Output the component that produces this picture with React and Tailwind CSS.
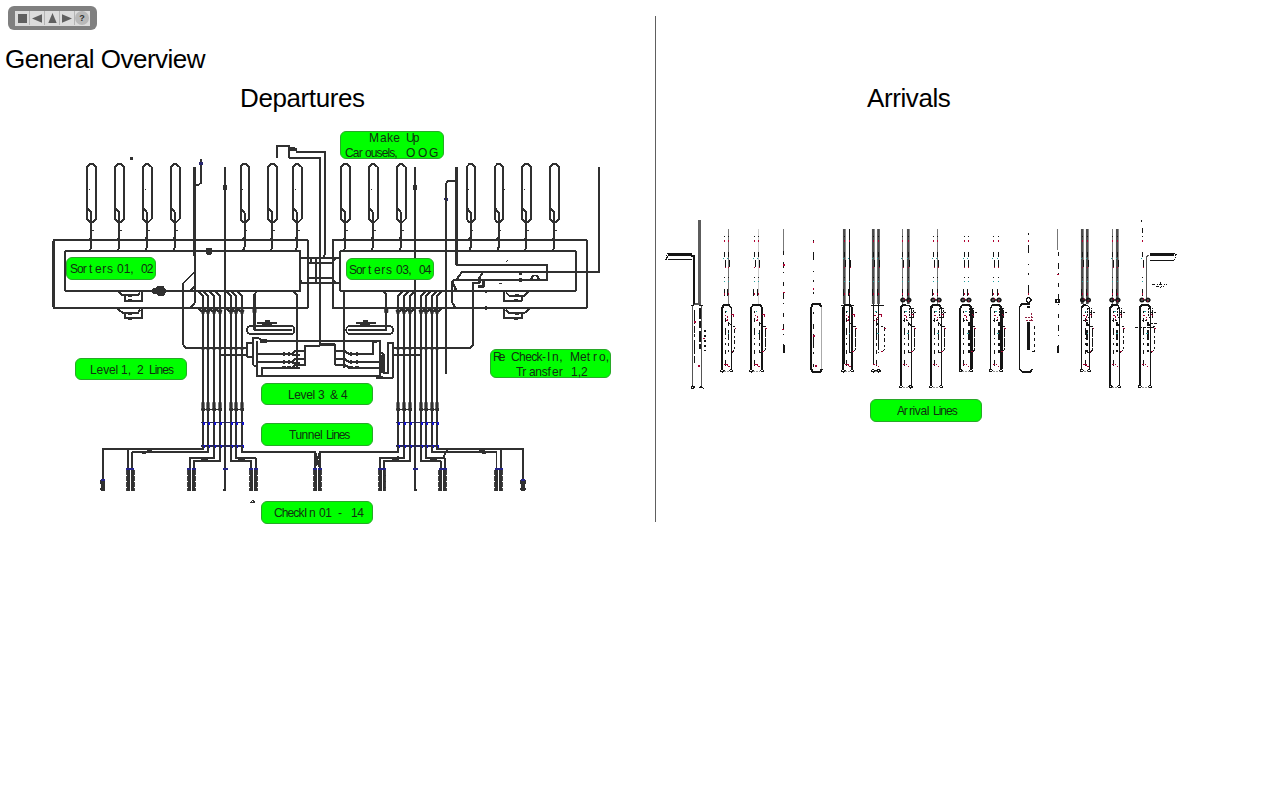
import React from "react";

const INK = "#303030";

const labels = {
  departures: [
    { box: "left-[340px] top-[131px] w-[104px] h-[28px]", lines: [
      [["M", "left-[28px]"], ["ake", "left-[39px] tracking-[0.3px]"], ["Up", "left-[65px] tracking-[-2px]"]],
      [["Car", "left-[4px] tracking-[-0.8px]"], ["ousels,", "left-[24px] tracking-[-0.9px]"], ["O", "left-[65px]"], ["O", "left-[77px]"], ["G", "left-[88px]"]],
    ] },
    { box: "left-[66px] top-[257px] w-[90px] h-[23px]", lines: [
      [["Sor", "left-[3px] tracking-[-1px]"], ["t", "left-[22px]"], ["er", "left-[28px] tracking-[0.6px]"], ["s", "left-[40px]"], ["01,", "left-[50px]"], ["02", "left-[74px] tracking-[-0.9px]"]],
    ] },
    { box: "left-[346px] top-[258px] w-[88px] h-[22px]", lines: [
      [["Sor", "left-[2px] tracking-[-1px]"], ["t", "left-[21px]"], ["er", "left-[27px] tracking-[0.6px]"], ["s", "left-[39px]"], ["03,", "left-[49px] tracking-[-0.5px]"], ["04", "left-[72px] tracking-[-0.8px]"]],
    ] },
    { box: "left-[75px] top-[358px] w-[112px] h-[22px]", lines: [
      [["Level", "left-[14px] tracking-[-0.1px]"], ["1,", "left-[45px]"], ["2", "left-[61px]"], ["Lines", "left-[73px] tracking-[-0.9px]"]],
    ] },
    { box: "left-[261px] top-[383px] w-[112px] h-[22px]", lines: [
      [["Level", "left-[26px] tracking-[-0.4px]"], ["3", "left-[56px]"], ["&", "left-[68px]"], ["4", "left-[79px]"]],
    ] },
    { box: "left-[490px] top-[349px] w-[121px] h-[29px]", lines: [
      [["Re", "left-[2px] tracking-[-3px]"], ["Check-", "left-[20px] tracking-[-0.6px]"], ["I", "left-[56px]"], ["n,", "left-[61px] tracking-[0.5px]"], ["Met", "left-[79px] tracking-[0px]"], ["r", "left-[102px]"], ["o,", "left-[108px]"]],
      [["Tr", "left-[25px] tracking-[-0.6px]"], ["ansf", "left-[38px] tracking-[-0.3px]"], ["er", "left-[61px]"], ["1,2", "left-[80px]"]],
    ] },
    { box: "left-[261px] top-[423px] w-[112px] h-[23px]", lines: [
      [["Tunnel", "left-[27px] tracking-[-0.5px]"], ["Lines", "left-[64px] tracking-[-1.1px]"]],
    ] },
    { box: "left-[261px] top-[501px] w-[112px] h-[23px]", lines: [
      [["Check", "left-[12px] tracking-[-0.9px]"], ["I", "left-[42px]"], ["n", "left-[47px]"], ["01", "left-[57px] tracking-[-0.3px]"], ["-", "left-[76px]"], ["14", "left-[89px] tracking-[-0.3px]"]],
    ] },
  ],
  arrivals: [
    { box: "left-[214px] top-[399px] w-[112px] h-[23px]", lines: [
      [["Ar", "left-[26px] tracking-[-1.2px]"], ["rival", "left-[38px] tracking-[-0.4px]"], ["Lines", "left-[62px] tracking-[-1px]"]],
    ] },
  ],
};

function Label({ box, lines }) {
  return (
    <button className={`absolute ${box} flex flex-col justify-center rounded-[6px] border border-[#28a828] bg-[#00ff00] text-left`}>
      {lines.map((words, i) => (
        <span key={i} className="relative block h-[15px] w-full shrink-0">
          {words.map(([t, pos], j) => (
            <span key={j} className={`absolute top-px ${pos} origin-center scale-y-112 whitespace-pre text-[12px] leading-[15px] text-[#103010]`}>{t}</span>
          ))}
        </span>
      ))}
    </button>
  );
}

function Toolbar() {
  const cell = "flex h-[14px] w-[15px] items-center justify-center border-r border-[#b5b5b5]";
  return (
    <nav className="ml-2 flex h-6 w-[89px] items-center justify-center rounded-[6px] bg-[#808080]">
      <div className="flex h-[15px] w-[75px] items-center bg-[#dcdcdc]">
        <span className={cell}><svg width="9" height="9"><path d="M0 0h9v9h-9z" fill="#606060" /></svg></span>
        <span className={cell}><svg width="10" height="9"><path d="M0 4.5L10 0.3v8.4z" fill="#606060" /></svg></span>
        <span className={cell}><svg width="9" height="10"><path d="M4.5 0L8.7 10h-8.4z" fill="#606060" /></svg></span>
        <span className={cell}><svg width="10" height="9"><path d="M0 0.3L10 4.5L0 8.7z" fill="#606060" /></svg></span>
        <span className="flex h-[14px] w-[14px] items-center justify-center rounded-full bg-[#b8b8b8] text-[9px] font-bold leading-none text-[#303030]">?</span>
      </div>
    </nav>
  );
}

const carousels = [91.3, 119.3, 147, 175, 244.5, 272.3, 297, 345.3, 373, 401, 470.7, 498.7, 526.3, 554.3];
const leftBundle = [203, 208, 214, 220, 231, 236, 242];
const rightBundle = [398, 404, 410, 421, 426, 432, 437];
const desks = [128.3, 132.3, 189.3, 193.7, 251.3, 255.7, 315.3, 319.7, 380, 384, 440.7, 444.7, 496.5, 500.7];

function Bundle({ xs, dir, mid }) {
  const a = xs[0] - 2;
  const b = xs[6] + 2;
  return (
    <g>
      {xs.map((x) => (
        <g key={x}>
          <path d={`M${x - dir * 5} 291L${x} 296V446M${x - dir * 5} 308l${dir * 4} 4`} strokeWidth="2" />
          <path d={`M${x - 2} 310h4l-1 4h-2zM${x - 1.3} 402.5h2.6v5h-2.6z`} fill={INK} strokeWidth="0.8" />
          <path d={`M${x - 1} 347h2v3h-2zM${x - 1.5} 408h3v2.5h-3z`} fill={INK} strokeWidth="0.8" />
        </g>
      ))}
      <path d={`M${mid} 167V490`} strokeWidth="2" />
      <path d={`M${a} 409.3H${xs[dir > 0 ? 3 : 2] + 2}M${xs[dir > 0 ? 4 : 3] - 2} 409.3H${b}`} strokeWidth="1.3" />
      <path d={`M${a} 446H${b}M${a} 422.7H${b}`} stroke="#26265a" strokeWidth="1.2" />
      {xs.map((x) => (
        <path key={x} d={`M${x} 421.5h2v3h-2zM${x} 445h2v3h-2z`} fill="#1111cc" stroke="none" />
      ))}
      <path d={`M${mid - 1.2} 186h2.4v3h-2.4z`} fill={INK} />
    </g>
  );
}

function DepartureDiagram() {
  return (
    <svg className="block" width="655" height="530" viewBox="0 0 655 530" fill="none" stroke={INK} strokeWidth="2" strokeLinejoin="round" shapeRendering="crispEdges">
      {carousels.map((x, i) => (
        <g key={x}>
          <path d={`M${x - 4} 219V167l2.5-2.8h3l3 2.8V219l-3 3h-3z`} />
          <path d={`M${x - 3.5} 208.5l3.5 4V247l-1.5 3.5M${x} 237l-2 2.7`} />
          <path d={`M${x + (i % 2 ? 5 : -2.5)} 189h1M${x + 1} 230.5h1.5`} strokeWidth="1" />
        </g>
      ))}
      <rect x="53.5" y="240" width="254.2" height="68" rx="1" strokeWidth="2.1" />
      <rect x="65.2" y="251" width="234.8" height="40.2" rx="1" />
      <rect x="332.9" y="240" width="254" height="68" rx="1" />
      <rect x="340.2" y="251" width="235.6" height="40.2" rx="1" strokeWidth="2" />
      <Bundle xs={leftBundle} dir={1} mid={225} />
      <Bundle xs={rightBundle} dir={-1} mid={415} />

      <path d="M194.6 167V256" strokeWidth="2.5" />
      <path d="M194.6 256V303L190 308M194.6 272L183 283.5V344.5L186 347.8H247M201.2 159V182.5L199 184.5H195M190 291l4.5-5" />
      <path d="M276.7 158V145.7H289.3V157.7H320V345M290 148.5H296.5V152.2H325V254.5L323 257.5" strokeWidth="1.8" />
      <path d="M290 147.5h5v3h-5z" fill={INK} strokeWidth="1" />
      <path d="M300 263V259L303 257.7H340M308 262.7H332M308 278H332M300 278L302 283.2H340M311 258v5M316 258v25M332 262l3-3M332 278l4 5" strokeWidth="1.6" />
      <path d="M205.5 251l1.5-2.5h4l1.5 2.5-1.5 3h-4z" fill={INK} strokeWidth="1" />
      <path d="M151 291.3l2.5-3.2h2.5l2-1.5h5l2.5 3v3l-2 2.5h-5l-2-1.3h-2z" fill={INK} strokeWidth="1" />
      <path d="M130 158.5h2.5M161 308v1" strokeWidth="2.4" />
      <path d="M484.5 291.3h2.5M484.5 308h2.5" strokeWidth="3.4" />
      <path d="M199.5 162.5h3v2h-3zM444.5 198h3v2h-3z" fill="#27276f" stroke="#27276f" strokeWidth="1" />
      {[0, 17.5].map((d) => (
        <g key={d}>
          <path d={`M117.5 ${291 + d}l5 4.3H138l2-3M124.5 ${296 + d}v4.8H142.2V${291.5 + d}`} />
          <path d={`M529.5 ${291 + d}l-5 4.5H509l-3-3M521.7 ${296 + d}v4.8H504V${291.5 + d}`} />
          <path d={`M128 ${295.7 + d}h4M128 ${300.5 + d}h4M515 ${295.7 + d}h4M514 ${300.5 + d}h4`} strokeWidth="3" />
        </g>
      ))}

      <path d="M446 373.5V183.5L448 181.3H456" />
      <path d="M456.4 167V265" strokeWidth="2.4" />
      <path d="M456.4 264.8H547.3V280H453M457 279L461.7 272.4H599.3V167M453 280L452 283.5V302L455 307.5M482.5 273L479.5 277.5V279M483.5 280.5V286.5H478M473.2 345L470.5 347.8H393M473.2 345V283H479.5V278.5M530 280L534 275M536 275l4 5" strokeWidth="2.1" />
      <path d="M520.5 270.5v4M520.5 278v4M452 281l4 9" strokeWidth="2.4" />
      <path d="M506 261.5l2-1.3M499 283h3" strokeWidth="1" />

      <rect x="247" y="325.8" width="47.5" height="8.4" rx="4" />
      <rect x="346.3" y="325.8" width="46.7" height="8.4" rx="4" />
      <path d="M257 291.5L254.5 294V330.3H292M294 291.5l2.7 3V354M344 291.5V368M383.5 291.5L386.2 294V330.3H348" strokeWidth="2.1" />
      <path d="M257 322.5h20M355.5 322.5h20" strokeWidth="2" />
      <path d="M262 323.5h10M264.5 321h5M360 323.5h10M363 321h5" strokeWidth="2" />
      <path d="M252.8 308.5v4h3.4v-4zM384.5 308.5v4h3.4v-4z" fill={INK} strokeWidth="0.8" />
      <path d="M220 358V354.8H247M393 354.8H420M247.4 342.8H253V357H247.4zM253 365V338.3H258.5L263 341.3H380V377M253 365L257 367V376H378M257 341V373M261.7 375.5V367.7H289M258 362H289M258 354H289M320 346H305.3V365M320 345H335V365" />
      <path d="M261 340h5v2h-5z" fill={INK} />
      {[354, 362, 367.7].map((y) => (
        <g key={y}>
          <path d={`M283 ${y - 1}h2v2h-2zM288 ${y - 1}h2v2h-2zM350 ${y - 1}h2v2h-2zM356 ${y - 1}h2v2h-2z`} fill={INK} strokeWidth="1.2" />
          <path d={`M283 ${y}h9l3-2.7h10M289 ${y}l4 .7h7M335 ${y - 2.7}h10l4 2.7h8`} />
        </g>
      ))}
      <path d="M296.5 351v17.5M305.3 346v19.5M344 362v6M357 354H372.7V341M357 362H380M357 367.7H380M380 341v11L383.5 354V373H388.3V343H392.7V377.7H376M381.5 355v18M376 375.5l8 2.2M320 343.5h15" />
      <path d="M371.5 340h5v2h-5zM379 364h2v7h-2z" fill={INK} strokeWidth="1" />

      <path d="M203 446V449.2H102.7V490M208 446V452.2H132.3V470M128.3 449.2V470M214 446V457.8H189.6V470M220 446V461H193.8V470M231 446V461H251.3V470M236 446V457.8H255.7V470M242 446V452.2H315.3V470M398 446V452.2H319.7V470M404 446V457.8H380V470M410 446V461H384V470M421 446V461H440.7V470M426 446V457.8H444.7V470M432 446V452.2H496.5V470M437 446V449.2H523.2V490M500.7 449.2V470M447 450L443 457.5M315.3 452l4.5 16M319.7 452l-4.5 15" strokeWidth="1.8" />
      <path d="M148 448.5h4l-1 3h-3zM142 452.5h4M202 459.5l5-2v3zM239 458.5l5 1-4 1.5zM393 460l5-3v3zM430 457.5l6 2-4 1zM478 448.5h4l4 4h-4zM316 464h4" strokeWidth="2" fill={INK} />
      {desks.map((x, i) => (
        <g key={x}>
          <path d={`M${x} 468V491`} strokeWidth="3" />
          <path d={`M${x + (i % 2 ? 1.8 : -1.8)} 470V491`} stroke="#444" strokeWidth="1" strokeDasharray="5 1" />
          <path d={`M${x - 2} 469.2h4`} stroke="#24248a" strokeWidth="1.7" />
        </g>
      ))}
      {[102.7, 523].map((x) => (
        <path key={x} d={`M${x - 2} 480.5h4v3h-4zM${x - 1.3} 484.5h2.6v2h-2.6zM${x - 2} 488h4v2h-4z`} fill={INK} strokeWidth="1.1" />
      ))}
      <path d="M100.7 479.7h4M521 479.7h4M222.5 469.3h5M412.5 469.3h5" stroke="#24248a" strokeWidth="1.7" />
      <path d="M223 490h3M414 490h3M251 502.5l1.8-2.5 1.8 2.5z" strokeWidth="1.1" />
    </svg>
  );
}

/* a/b: feed line positions, l/r: their styles; bl/br: box edges; end: box bottom; side: recirculation edge */
const units = [
  { a: 724.7, b: 728.3, l: "dash", r: "thin", bl: 722, br: 731.3, end: 371, side: 734.5, wl: 2.4, wr: 1.3 },
  { a: 754.3, b: 758.5, l: "dash", r: "pale", bl: 751, br: 762.3, end: 371, side: 765, wl: 1.6, wr: 2 },
  { a: 844.3, b: 849.5, l: "gray", r: "solid", bl: 843, br: 852.3, end: 371, side: 855, wl: 1.4, wr: 1.7, fill: true },
  { a: 873.3, b: 878.5, l: "gray", r: "gray", bl: 873, br: 879, end: 371, side: 884, wl: 2, wr: 1.8, fill: true, open: true },
  { a: 902.7, b: 908.3, l: "thin", r: "gray", bl: 900.7, br: 911, end: 387, side: 914, wl: 2.2, wr: 1, valve: true },
  { a: 933.5, b: 937.8, l: "dash", r: "thin", bl: 930.8, br: 941.3, end: 387, side: 944, wl: 2.6, wr: 1.5, valve: true },
  { a: 964, b: 968, l: "dash", r: "dash", bl: 960.3, br: 971.5, end: 371, side: 974.3, wl: 1.7, wr: 2.2, valve: true },
  { a: 993.5, b: 998, l: "dash", r: "dash", bl: 990.5, br: 1001.5, end: 371, side: 1004.2, wl: 1.3, wr: 2.2, valve: true },
  { a: 1082.3, b: 1087.3, l: "gray", r: "gray", bl: 1081.5, br: 1089.5, end: 371, side: 1092.5, wl: 1.8, wr: 1, valve: true },
  { a: 1112.7, b: 1117.3, l: "thin", r: "gray", bl: 1110.3, br: 1119.5, end: 387, side: 1123, wl: 2.2, wr: 1.5, valve: true },
  { a: 1142.7, b: 1147, l: "high", r: "none", bl: 1139.5, br: 1150.5, end: 387, side: 1154, wl: 2, wr: 1.8, valve: true },
];

function Feed({ x, kind }) {
  if (kind === "none") return null;
  return (
    <g>
      {kind === "gray" && <path d={`M${x} 229V304`} stroke="#4c4c4c" strokeWidth="2.7" shapeRendering="auto" />}
      {kind === "solid" && <path d={`M${x} 229V304`} strokeWidth="1.4" />}
      {kind === "thin" && <path d={`M${x} 229V304`} stroke="#777" strokeWidth="1" />}
      {kind === "pale" && <path d={`M${x} 229V304`} stroke="#ccc" strokeWidth="1" />}
      {kind === "high" && <path d="M1141.5 220v2M1142 228v5" strokeWidth="1" />}
      <path d={`M${x} 236V237M${x} 252V257M${x + 0.8} 260V267M${x} 277V278M${x - 0.7} 289V296`} strokeWidth="1" />
      <path d={`M${x} 240V242M${x + 0.5} 267V268M${x} 293V295`} stroke="#b00030" strokeWidth="1" />
      <path d={`M${x - 1} 258V259M${x} 281V282`} stroke="#20a0a0" strokeWidth="1" />
    </g>
  );
}

function Valve({ x }) {
  return (
    <g strokeWidth="1.4" shapeRendering="auto">
      <circle cx={x - 3} cy="300" r="1.8" />
      <circle cx={x + 3} cy="300" r="1.8" />
      <path d={`M${x - 5.5} 300h11`} />
      <path d={`M${x - 2} 299h1M${x + 2} 301h1`} stroke="#b00030" />
    </g>
  );
}

function Unit({ u }) {
  const m = (u.bl + u.br) / 2;
  return (
    <g>
      <Feed x={u.a} kind={u.l} />
      <Feed x={u.b} kind={u.r} />
      {u.fill && <path d={`M${u.a} 304V364M${u.b} 304V350`} strokeWidth="1.6" />}
      {u.fill && <path d={`M${u.bl - 2} 305.5h13`} strokeWidth="1.2" />}
      {u.valve && <Valve x={m} />}
      {!u.open && <path d={`M${u.bl} ${u.end - 2}V308L${u.bl + 2} 305H${m}`} strokeWidth={u.wl} />}
      {!u.open && <path d={`M${m} 305H${u.br - 2}L${u.br} 308V${u.end - 2}`} strokeWidth={u.wr} />}
      <path d={`M${u.bl - 1.5} ${u.end}l1.5-2 2 1.5-1.5 1.5zM${u.br + 1.5} ${u.end}l-1.5-2-2 1.5 1.5 1.5z`} strokeWidth="1" />
      <path d={`M${u.bl + 2} ${u.end}H${u.br - 2}`} stroke="#999" strokeWidth="1" strokeDasharray="2 1" />
      <path d={`M${u.bl + 3.5} 311V366`} strokeWidth="1" strokeDasharray="2 5 4 6 7 3 1 4" />
      <path d={`M${u.br - 2.5} 323V352`} strokeWidth="1.2" strokeDasharray="3 4 10 3" />
      <path d={`M${m - 2} 315l3 2v3l-3 1M${m - 3} 364h3l3 3`} stroke="#a00030" strokeWidth="1" strokeDasharray="2 1" />
      <path d={`M${m} 311v1M${m + 2} 333v1`} stroke="#20a0a0" />
      <path d={`M${u.br - 3} 322l3 4H${u.side}V350l-2 2h-4`} strokeWidth="1" strokeDasharray={u.side - u.br > 3 ? "4 3 2 2" : "9 1"} />
      <path d={`M${u.side - 3} 351h1.5M${u.side} 328h1.5M${u.br} 314h2v3`} stroke="#a00030" strokeWidth="1" />
      {u.valve && <path d={`M${u.br - 2} 308h4v9h-4zM${u.br} 312h5M${m - 3} 320h6`} strokeWidth="1" strokeDasharray="2 1" />}
    </g>
  );
}

function ArrivalDiagram() {
  return (
    <svg className="block" width="622" height="530" viewBox="656 0 622 530" fill="none" stroke="#151515" strokeWidth="1.3" shapeRendering="crispEdges">
      {units.map((u) => <Unit key={u.bl} u={u} />)}
      <path d="M699.5 220V304" stroke="#5c5c5c" strokeWidth="3" />
      <path d="M668 254.5H692M1150 254.5H1174" strokeWidth="2.6" />
      <path d="M668 259.7H692M1150 260.5H1174" strokeWidth="1.4" />
      <path d="M668 253l-2 2 2 2-3 2 3 1M1173 253l3 1.5-1 3M1174 260l2-2" strokeWidth="1" strokeDasharray="2 1" />
      <path d="M691 256H693.7V305" strokeWidth="1.6" />
      <path d="M1146.7 298V257l2-2" strokeWidth="1" stroke="#555" />
      <path d="M692.6 387V306L695 304h5l1.2 2V387" stroke="#555" strokeWidth="1.1" />
      <path d="M694.5 310V364" strokeWidth="1.6" strokeDasharray="14 2 7 1 3 3" />
      <path d="M699.5 308V349" strokeWidth="2" strokeDasharray="11 2 7 3" />
      <path d="M704 331h2M705 335v16" strokeWidth="1.2" strokeDasharray="2 3" />
      <path d="M695 321v1.5M698 366h1.5M704 338v1" stroke="#a00030" />
      <path d="M691 388l1.5-2 2 1-1.5 1.5zM703 388l-2-2-1.5 1.5z" strokeWidth="1" />
      <path d="M691 305.5h3M699 305.5h4" />
      <path d="M783.3 229V251M1057.3 229V250" stroke="#777" strokeWidth="1" />
      <path d="M783.3 251V350M1058 252V348" strokeDasharray="4 7 6 4 1 9" strokeWidth="1" />
      <path d="M783.8 345V353M1058 346V353" strokeWidth="2" />
      <path d="M784 264v2M784 292v1M783 329v1M1058 274v1" stroke="#b00030" />
      <rect x="1056" y="299.5" width="3" height="3" strokeWidth="1.4" />
      <path d="M813.5 240V294M1028.5 233V297" strokeDasharray="2 10 8 11 1 8" strokeWidth="1.2" />
      <path d="M813.5 241v1.5M813.5 288v2M1028.5 240v2M1028.5 293v2" stroke="#b00030" />
      <path d="M811 369V308L813 303.5H819.5L821.5 307M811 369l2 3h7l2-3" strokeWidth="2" />
      <path d="M821.8 307V369" stroke="#aaa" strokeWidth="1" />
      <path d="M813.5 312V367" strokeDasharray="2 10 5 5 14 4" strokeWidth="1.5" />
      <path d="M813 336h1.5M815 366h1.5" stroke="#a00030" />
      <path d="M1030 304H1022L1019.5 307V369l3 3h8l1.5-3" strokeWidth="1.8" />
      <circle cx="1028.7" cy="300" r="2.3" />
      <path d="M1028.3 306V350" strokeWidth="2.4" strokeDasharray="2 14 40" />
      <path d="M1025 317h9M1026 320h7M1031 313v8" stroke="#902040" strokeWidth="1" strokeDasharray="2 1" />
      <path d="M1034 326V351h-3" strokeDasharray="3 3" strokeWidth="1" />
      <path d="M1152 284.5h15M1156 286.5h8M1160 282v6" strokeDasharray="3 2 1 1" strokeWidth="1" />
      <path d="M1135 327.5h20M1150 323h8" strokeWidth="1" strokeDasharray="3 1" />
    </svg>
  );
}

export default function App() {
  return (
    <main className="h-[810px] w-[1278px] overflow-hidden bg-white font-['Liberation_Sans',Arial,sans-serif] text-black">
      <div className="flex h-[530px]">
        <section className="relative w-[655px] shrink-0">
          <div className="absolute inset-0"><DepartureDiagram /></div>
          <header className="relative pt-[6px]">
            <Toolbar />
            <h1 className="ml-[5px] mt-[14px] whitespace-nowrap text-[26px] leading-[30px] tracking-[-0.5px]">General Overview</h1>
            <h2 className="ml-[240px] mt-[9px] whitespace-nowrap text-[26px] leading-[30px] tracking-[-0.4px]">Departures</h2>
          </header>
          {labels.departures.map((l) => <Label key={l.box} {...l} />)}
        </section>
        <div className="mt-4 h-[506px] w-px shrink-0 bg-[#606060]" />
        <section className="relative w-[622px] shrink-0">
          <div className="absolute inset-0"><ArrivalDiagram /></div>
          <h2 className="relative ml-[211px] pt-[83px] text-[26px] leading-[30px] tracking-[-0.4px]">Arrivals</h2>
          {labels.arrivals.map((l) => <Label key={l.box} {...l} />)}
        </section>
      </div>
    </main>
  );
}
